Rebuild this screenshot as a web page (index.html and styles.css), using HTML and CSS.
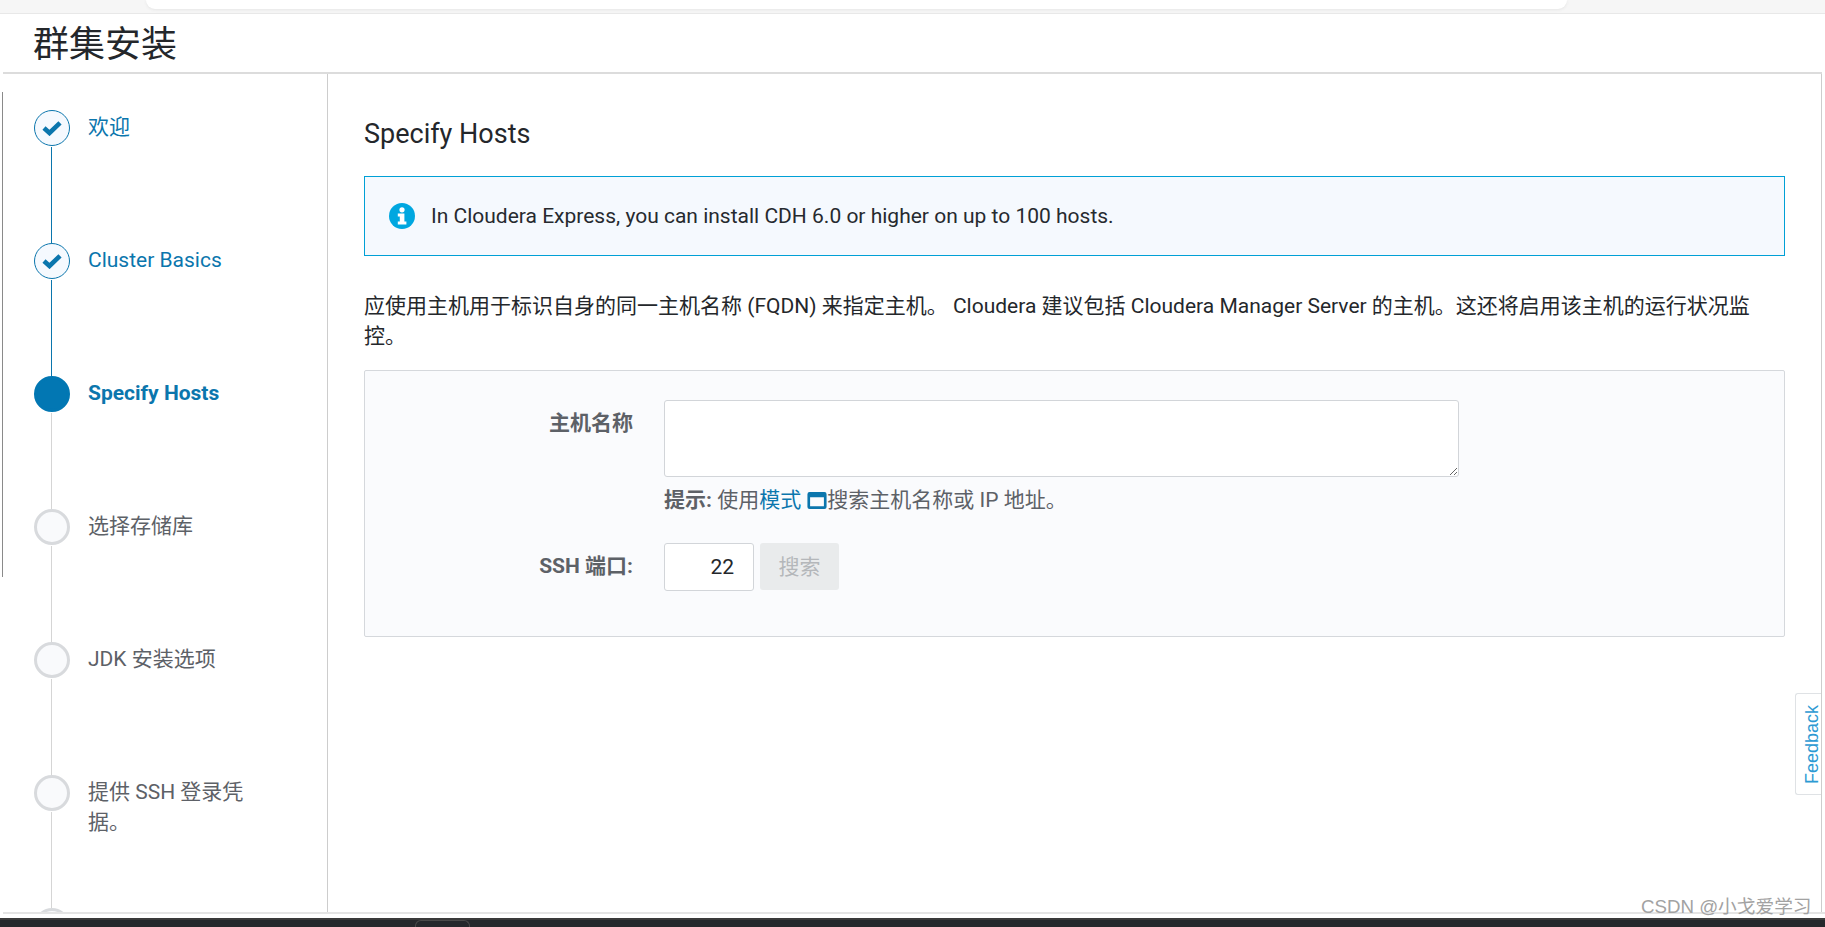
FILE: index.html
```html
<!DOCTYPE html>
<html lang="zh-CN">
<head>
<meta charset="utf-8">
<title>群集安装</title>
<link rel="stylesheet" href="styles.css">
</head>
<body>
<div class="topstrip"><div class="addressbar"></div></div>
<span class="edge-line"></span>
<div class="window">
  <header class="page-header"><h1>群集安装</h1></header>
  <div class="wizard">
    <nav class="sidebar">
      <div class="step done">
        <span class="dot"><svg class="check" viewBox="0 0 20 16"><path d="M2 8 L7.500 13 L18 2.800" fill="none" stroke="#0b76ad" stroke-width="4.6"/></svg></span>
        <a class="step-label">欢迎</a>
      </div>
      <div class="step done">
        <span class="dot"><svg class="check" viewBox="0 0 20 16"><path d="M2 8 L7.500 13 L18 2.800" fill="none" stroke="#0b76ad" stroke-width="4.6"/></svg></span>
        <a class="step-label">Cluster Basics</a>
      </div>
      <div class="step current">
        <span class="dot"></span>
        <a class="step-label">Specify Hosts</a>
      </div>
      <div class="step">
        <span class="dot"></span>
        <span class="step-label">选择存储库</span>
      </div>
      <div class="step">
        <span class="dot"></span>
        <span class="step-label">JDK 安装选项</span>
      </div>
      <div class="step">
        <span class="dot"></span>
        <span class="step-label">提供 SSH 登录凭据。</span>
      </div>
      <div class="step">
        <span class="dot"></span>
      </div>
    </nav>
    <main class="content">
      <h2>Specify Hosts</h2>
      <div class="alert">
        <svg class="info" viewBox="0 0 26 26"><circle cx="13" cy="13" r="13" fill="#00a7e0"/><circle cx="13" cy="6.800" r="2.600" fill="#fff"/><path d="M8.800 10.600h6.600v8h2v3H8.800v-3h2v-5h-2z" fill="#fff"/></svg>
        <span>In Cloudera Express, you can install CDH 6.0 or higher on up to 100 hosts.</span>
      </div>
      <p class="intro">应使用主机用于标识自身的同一主机名称 (FQDN) 来指定主机。 Cloudera 建议包括 Cloudera Manager Server 的主机。这还将启用该主机的运行状况监控。</p>
      <form class="panel">
        <div class="row">
          <label class="field-label">主机名称</label>
          <div class="field">
            <textarea class="hosts"></textarea>
            <div class="hint"><b>提示:</b> 使用<a>模式</a> <svg class="modal-icon" viewBox="0 0 18 16"><path d="M0 2a2 2 0 0 1 2-2h14a2 2 0 0 1 2 2v12a2 2 0 0 1-2 2H2a2 2 0 0 1-2-2zM2.500 5v8.500h13V5z" fill="#0b76ad" fill-rule="evenodd"/></svg>搜索主机名称或 IP 地址。</div>
          </div>
        </div>
        <div class="row port-row">
          <label class="field-label">SSH 端口:</label>
          <div class="port-field">
            <input class="port" type="text" value="22">
            <button class="search" type="button" disabled>搜索</button>
          </div>
        </div>
      </form>
    </main>
  </div>
  <a class="feedback">Feedback</a>
</div>
<div class="taskbar"><span class="task-tab"></span></div>
<span class="watermark">CSDN @小戈爱学习</span>
</body>
</html>
```
FILE: styles.css
```css
* { box-sizing: border-box; }
html, body { height: 100%; }
body {
  position: relative;
  margin: 0;
  display: flex;
  flex-direction: column;
  height: 927px;
  overflow: hidden;
  background: #fff;
  font-family: Roboto, "Noto Sans CJK SC", sans-serif;
  font-size: 21px;
  color: #262a2f;
}
.topstrip {
  flex: 0 0 14px;
  background: #f6f6f6;
  border-bottom: 1px solid #e8e8e8;
  padding-left: 146px;
  padding-right: 258px;
}
.addressbar {
  height: 9px;
  background: #fff;
  border-radius: 0 0 20px 20px;
  box-shadow: 0 1px 3px #e6e6e6;
}
.edge-line {
  position: absolute;
  left: 2px;
  top: 92px;
  width: 1px;
  height: 485px;
  background: #8a8a8a;
}
.window {
  position: relative;
  flex: 0 0 900px;
  display: flex;
  flex-direction: column;
  margin-left: 3px;
  padding-right: 3px;
  border-bottom: 2px solid #e4e4e4;
  overflow: hidden;
  background: #fff;
}
.page-header {
  flex: 0 0 60px;
  border-bottom: 2px solid #dcdcdc;
  padding-left: 30px;
}
h1 {
  margin: 0;
  font-size: 36px;
  font-weight: 400;
  line-height: 50px;
  padding-top: 6px;
  color: #24272b;
}
.wizard {
  flex: 1;
  display: flex;
  min-height: 0;
  border-right: 1px solid #cdcdcd;
}
.sidebar {
  flex: 0 0 325px;
  border-right: 1px solid #cdcdcd;
  padding: 36px 0 0 31px;
  overflow: hidden;
}
.step {
  position: relative;
  display: flex;
  height: 133px;
  gap: 18px;
  flex-shrink: 0;
}
.step::after {
  content: "";
  position: absolute;
  left: 17px;
  top: 37px;
  width: 1px;
  height: 96px;
  background: #d5d5d5;
}
.step.done::after { background: #0b76ad; }
.step:last-child::after { display: none; }
.dot {
  flex: 0 0 36px;
  height: 36px;
  border-radius: 50%;
  border: 3px solid #d8dadd;
  background: #f9fafc;
  display: flex;
  align-items: center;
  justify-content: center;
}
.done .dot {
  border: 1px solid #0b76ad;
  background: #f5f9fe;
}
.current .dot {
  border-color: #0277b3;
  background: #0277b3;
}
.check { width: 20px; height: 16px; }
.step-label {
  width: 170px;
  padding-top: 2px;
  line-height: 30px;
  color: #5d6167;
}
.done .step-label { color: #0b76ad; }
.current .step-label { color: #0b76ad; font-weight: 700; }
.content {
  flex: 1;
  padding: 40px 36px 0 36px;
  min-width: 0;
}
h2 {
  margin: 0;
  font-size: 27px;
  font-weight: 400;
  line-height: 40px;
  color: #24272b;
}
.alert {
  margin-top: 22px;
  height: 80px;
  display: flex;
  align-items: center;
  gap: 16px;
  padding-left: 24px;
  background: #f5f9fe;
  border: 1px solid #00a0d6;
}
.info { width: 26px; height: 26px; }
.intro {
  margin: 35px 0 0;
  line-height: 30px;
  color: #24272b;
}
.panel {
  margin-top: 19px;
  height: 267px;
  padding-top: 29px;
  background: #fafbfd;
  border: 1px solid #d5d8dc;
  border-radius: 2px;
}
.row { display: flex; gap: 30px; }
.port-row { margin-top: 28px; }
.field-label {
  flex: 0 0 269px;
  text-align: right;
  font-weight: 700;
  line-height: 30px;
  padding-top: 8px;
  padding-right: 1px;
  color: #5d6167;
}
.port-row .field-label { padding-top: 8px; }
.field { width: 795px; }
.hosts {
  display: block;
  width: 100%;
  height: 77px;
  background: #fff;
  border: 1px solid #d2d5d9;
  border-radius: 3px;
  outline: none;
}
.hint {
  margin-top: 8px;
  line-height: 30px;
  color: #5d6167;
}
.hint b { font-weight: 700; }
.hint a { color: #0b76ad; }
.modal-icon { width: 20px; height: 17px; margin-left: 1px; vertical-align: -2px; }
.port-field { display: flex; gap: 6px; height: 47px; }
.port {
  width: 90px;
  height: 48px;
  padding: 0 19px 0 0;
  text-align: right;
  font: 21px Roboto, sans-serif;
  color: #24272b;
  background: #fff;
  border: 1px solid #d2d5d9;
  border-radius: 3px;
  outline: none;
}
.search {
  width: 79px;
  height: 47px;
  padding: 0 0 3px;
  border: 0;
  border-radius: 3px;
  background: #e9ebec;
  color: #b4b7ba;
  font: 21px Roboto, "Noto Sans CJK SC", sans-serif;
}
.feedback {
  position: absolute;
  right: 4px;
  top: 679px;
  width: 26px;
  height: 102px;
  padding-right: 8px;
  display: flex;
  align-items: center;
  justify-content: center;
  writing-mode: vertical-rl;
  transform: rotate(180deg);
  background: #fff;
  border: 1px solid #dfe2e5;
  border-left: 0;
  border-radius: 0 3px 3px 0;
  font-family: "Liberation Sans", sans-serif;
  font-size: 18px;
  color: #2d9ad3;
}
.watermark {
  position: absolute;
  left: 1641px;
  top: 895px;
  line-height: 24px;
  font-family: "Liberation Sans", "Noto Sans CJK SC", sans-serif;
  font-size: 18.7px;
  white-space: nowrap;
  color: #a2a2a2;
}
.taskbar {
  flex: 0 0 9px;
  margin-top: 4px;
  background: #25282c;
  border-top: 2px solid #3a3a3a;
  padding-left: 415px;
}
.task-tab {
  display: block;
  width: 55px;
  height: 7px;
  border-radius: 6px 6px 0 0;
  border: 1px solid #4a4a4a;
  border-bottom: 0;
}
```
